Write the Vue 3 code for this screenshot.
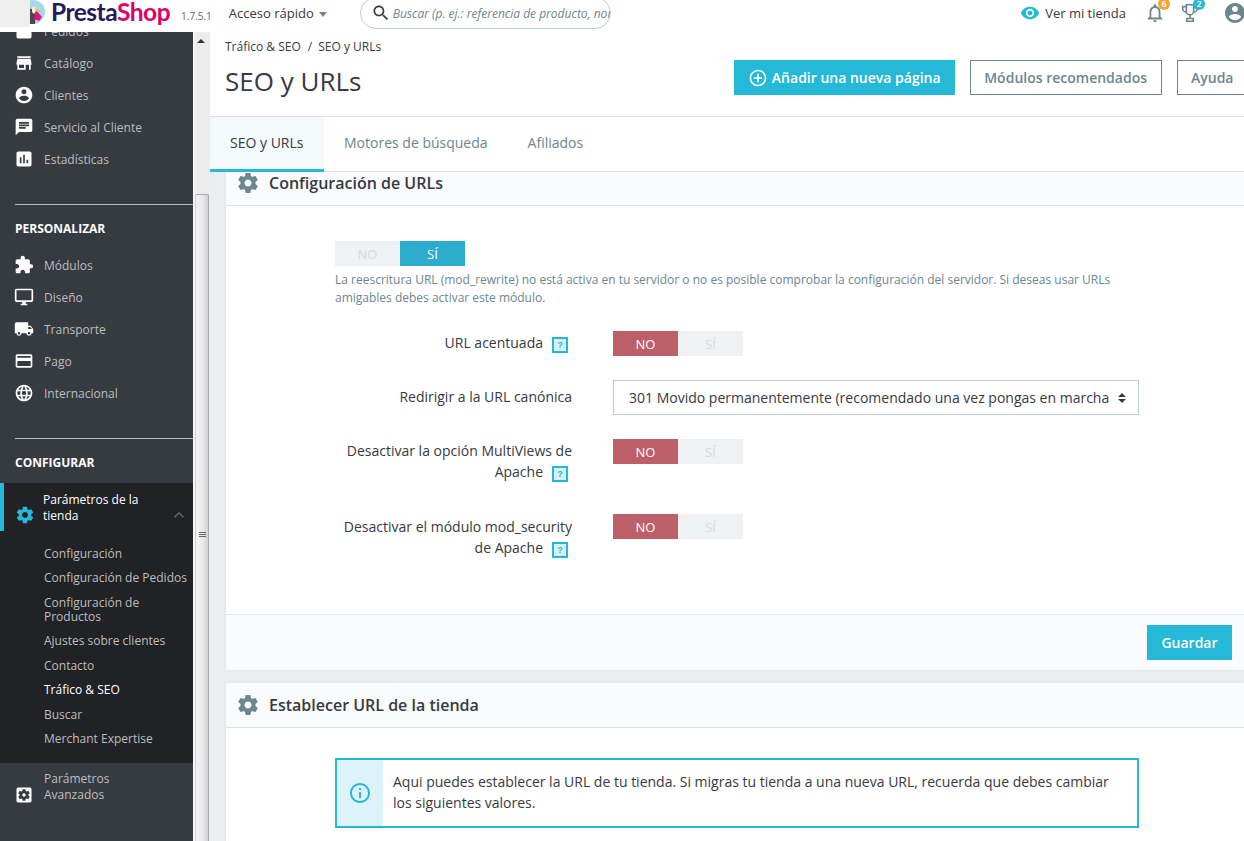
<script setup>
const P = {
  store: 'M20 4H4v2h16V4zm1 10v-2l-1-5H4l-1 5v2h1v6h10v-6h4v6h2v-6h1zm-9 4H6v-4h6v4z',
  account: 'M12 2C6.48 2 2 6.48 2 12s4.48 10 10 10 10-4.48 10-10S17.52 2 12 2zm0 3c1.66 0 3 1.34 3 3s-1.34 3-3 3-3-1.34-3-3 1.34-3 3-3zm0 14.2c-2.5 0-4.71-1.28-6-3.22.03-1.99 4-3.08 6-3.08 1.99 0 5.97 1.09 6 3.08-1.29 1.94-3.5 3.22-6 3.22z',
  chat: 'M20 2H4c-1.1 0-1.99.9-1.99 2L2 22l4-4h14c1.1 0 2-.9 2-2V4c0-1.1-.9-2-2-2zM6 9h12v2H6V9zm8 5H6v-2h8v2zm4-6H6V6h12v2z',
  stats: 'M19 3H5c-1.1 0-2 .9-2 2v14c0 1.1.9 2 2 2h14c1.1 0 2-.9 2-2V5c0-1.1-.9-2-2-2zM9 17H7v-7h2v7zm4 0h-2V7h2v10zm4 0h-2v-4h2v4z',
  ext: 'M20.5 11H19V7c0-1.1-.9-2-2-2h-4V3.5C13 2.12 11.88 1 10.5 1S8 2.12 8 3.5V5H4c-1.1 0-1.99.9-1.99 2v3.8H3.5c1.49 0 2.7 1.21 2.7 2.7s-1.21 2.7-2.7 2.7H2V20c0 1.1.9 2 2 2h3.8v-1.5c0-1.49 1.21-2.7 2.7-2.7 1.49 0 2.7 1.21 2.7 2.7V22H17c1.1 0 2-.9 2-2v-4h1.5c1.38 0 2.5-1.12 2.5-2.5S21.88 11 20.5 11z',
  desktop: 'M21 2H3c-1.1 0-2 .9-2 2v12c0 1.1.9 2 2 2h7v2H8v2h8v-2h-2v-2h7c1.1 0 2-.9 2-2V4c0-1.1-.9-2-2-2zm0 14H3V4h18v12z',
  truck: 'M20 8h-3V4H3c-1.1 0-2 .9-2 2v11h2c0 1.66 1.34 3 3 3s3-1.34 3-3h6c0 1.66 1.34 3 3 3s3-1.34 3-3h2v-5l-3-4zM6 18.5c-.83 0-1.5-.67-1.5-1.5s.67-1.5 1.5-1.5 1.5.67 1.5 1.5-.67 1.5-1.5 1.5zm13.5-9l1.96 2.5H17V9.5h2.5zm-1.5 9c-.83 0-1.5-.67-1.5-1.5s.67-1.5 1.5-1.5 1.5.67 1.5 1.5-.67 1.5-1.5 1.5z',
  card: 'M20 4H4c-1.11 0-1.99.89-1.99 2L2 18c0 1.11.89 2 2 2h16c1.11 0 2-.89 2-2V6c0-1.11-.89-2-2-2zm0 14H4v-6h16v6zm0-10H4V6h16v2z',
  globe: 'M11.99 2C6.47 2 2 6.48 2 12s4.47 10 9.99 10C17.52 22 22 17.52 22 12S17.52 2 11.99 2zm6.93 6h-2.95c-.32-1.25-.78-2.45-1.38-3.56 1.84.63 3.37 1.91 4.33 3.56zM12 4.04c.83 1.2 1.48 2.53 1.91 3.96h-3.82c.43-1.43 1.08-2.76 1.91-3.96zM4.26 14C4.1 13.36 4 12.69 4 12s.1-1.36.26-2h3.38c-.08.66-.14 1.32-.14 2 0 .68.06 1.34.14 2H4.26zm.82 2h2.95c.32 1.25.78 2.45 1.38 3.56-1.84-.63-3.37-1.9-4.33-3.56zm2.95-8H5.08c.96-1.66 2.49-2.93 4.33-3.56C8.81 5.55 8.35 6.75 8.03 8zM12 19.96c-.83-1.2-1.48-2.53-1.91-3.96h3.82c-.43 1.43-1.08 2.76-1.91 3.96zM14.34 14H9.66c-.09-.66-.16-1.32-.16-2 0-.68.07-1.35.16-2h4.68c.09.65.16 1.32.16 2 0 .68-.07 1.34-.16 2zm.25 5.56c.6-1.11 1.06-2.31 1.38-3.56h2.95c-.96 1.65-2.49 2.93-4.33 3.56zM16.36 14c.08-.66.14-1.32.14-2 0-.68-.06-1.34-.14-2h3.38c.16.64.26 1.31.26 2s-.1 1.36-.26 2h-3.38z',
  gear: 'M19.43 12.98c.04-.32.07-.64.07-.98s-.03-.66-.07-.98l2.11-1.65c.19-.15.24-.42.12-.64l-2-3.46c-.12-.22-.39-.3-.61-.22l-2.49 1c-.52-.4-1.08-.73-1.69-.98l-.38-2.65C14.46 2.18 14.25 2 14 2h-4c-.25 0-.46.18-.49.42l-.38 2.65c-.61.25-1.17.59-1.69.98l-2.49-1c-.23-.09-.49 0-.61.22l-2 3.46c-.13.22-.07.49.12.64l2.11 1.65c-.04.32-.07.65-.07.98s.03.66.07.98l-2.11 1.65c-.19.15-.24.42-.12.64l2 3.46c.12.22.39.3.61.22l2.49-1c.52.4 1.08.73 1.69.98l.38 2.65c.03.24.24.42.49.42h4c.25 0 .46-.18.49-.42l.38-2.65c.61-.25 1.17-.59 1.69-.98l2.49 1c.23.09.49 0 .61-.22l2-3.46c.12-.22.07-.49-.12-.64l-2.11-1.65zM12 15.5c-1.93 0-3.5-1.57-3.5-3.5s1.57-3.5 3.5-3.5 3.5 1.57 3.5 3.5-1.57 3.5-3.5 3.5z',
  gearBox: 'M12 10c-1.1 0-2 .9-2 2s.9 2 2 2 2-.9 2-2-.9-2-2-2zm7-7H5c-1.11 0-2 .9-2 2v14c0 1.1.89 2 2 2h14c1.11 0 2-.9 2-2V5c0-1.1-.89-2-2-2zm-1.75 9c0 .23-.02.46-.05.68l1.48 1.16c.13.11.17.3.08.45l-1.4 2.42c-.09.15-.27.21-.43.15l-1.74-.7c-.36.28-.76.51-1.18.69l-.26 1.85c-.03.17-.18.3-.35.3h-2.8c-.17 0-.32-.13-.35-.29l-.26-1.85c-.43-.18-.82-.41-1.18-.69l-1.74.7c-.16.06-.34 0-.43-.15l-1.4-2.42c-.09-.15-.05-.34.08-.45l1.48-1.16c-.03-.23-.05-.46-.05-.69 0-.23.02-.46.05-.68l-1.48-1.16c-.13-.11-.17-.3-.08-.45l1.4-2.42c.09-.15.27-.21.43-.15l1.74.7c.36-.28.76-.51 1.18-.69l.26-1.85c.03-.17.18-.3.35-.3h2.8c.17 0 .32.13.35.29l.26 1.85c.43.18.82.41 1.18.69l1.74-.7c.16-.06.34 0 .43.15l1.4 2.42c.09.15.05.34-.08.45l-1.48 1.16c.03.23.05.46.05.69z',
  orders: 'M19 3H5c-1.1 0-2 .9-2 2v14c0 1.1.9 2 2 2h14c1.1 0 2-.9 2-2V5c0-1.1-.9-2-2-2zm-7 8c-1.66 0-3-1.34-3-3h2c0 .55.45 1 1 1s1-.45 1-1h2c0 1.66-1.34 3-3 3z',
  eye: 'M12 4.5C7 4.5 2.73 7.61 1 12c1.73 4.39 6 7.5 11 7.5s9.27-3.11 11-7.5c-1.73-4.39-6-7.5-11-7.5zM12 17c-2.76 0-5-2.24-5-5s2.24-5 5-5 5 2.24 5 5-2.24 5-5 5zm0-8c-1.66 0-3 1.34-3 3s1.34 3 3 3 3-1.34 3-3-1.34-3-3-3z',
  bell: 'M12 22c1.1 0 2-.9 2-2h-4c0 1.1.9 2 2 2zm6-6v-5c0-3.07-1.63-5.64-4.5-6.32V4c0-.83-.67-1.5-1.5-1.5s-1.5.67-1.5 1.5v.68C7.64 5.36 6 7.92 6 11v5l-2 2v1h16v-1l-2-2zm-2 1H8v-6c0-2.48 1.51-4.5 4-4.5s4 2.02 4 4.5v6z',
  search: 'M15.5 14h-.79l-.28-.27C15.41 12.59 16 11.11 16 9.5 16 5.91 13.09 3 9.5 3S3 5.91 3 9.5 5.91 16 9.5 16c1.61 0 3.09-.59 4.23-1.57l.27.28v.79l5 4.99L20.49 19l-4.99-5zm-6 0C7.01 14 5 11.99 5 9.5S7.01 5 9.5 5 14 7.01 14 9.5 11.99 14 9.5 14z',
  add: 'M13 7h-2v4H7v2h4v4h2v-4h4v-2h-4V7zm-1-5C6.48 2 2 6.48 2 12s4.48 10 10 10 10-4.48 10-10S17.52 2 12 2zm0 18c-4.41 0-8-3.59-8-8s3.59-8 8-8 8 3.59 8 8-3.59 8-8 8z',
  info: 'M11 17h2v-6h-2v6zm1-15C6.48 2 2 6.48 2 12s4.48 10 10 10 10-4.48 10-10S17.52 2 12 2zm0 18c-4.41 0-8-3.59-8-8s3.59-8 8-8 8 3.59 8 8-3.59 8-8 8zM11 9h2V7h-2v2z',
  less: 'M12 8l-6 6 1.41 1.41L12 10.83l4.59 4.58L18 14z',
  trophy: 'M8 3h8v7a4 4 0 0 1-8 0V3zM8 5H4v2a4 4 0 0 0 4 4M16 5h4v2a4 4 0 0 1-4 4M12 14v4M8.5 18h7v3h-7z'
}
const top = [
  { t: 'Pedidos', i: P.orders },
  { t: 'Catálogo', i: P.store },
  { t: 'Clientes', i: P.account },
  { t: 'Servicio al Cliente', i: P.chat },
  { t: 'Estadísticas', i: P.stats }
]
const custom = [
  { t: 'Módulos', i: P.ext },
  { t: 'Diseño', i: P.desktop },
  { t: 'Transporte', i: P.truck },
  { t: 'Pago', i: P.card },
  { t: 'Internacional', i: P.globe }
]
const subs = [
  { t: 'Configuración', h: 24 },
  { t: 'Configuración de Pedidos', h: 24 },
  { t: 'Configuración de Productos', h: 39 },
  { t: 'Ajustes sobre clientes', h: 24 },
  { t: 'Contacto', h: 25 },
  { t: 'Tráfico & SEO', h: 24 },
  { t: 'Buscar', h: 25 },
  { t: 'Merchant Expertise', h: 24 }
]
subs[5].on = true
</script>

<template>
  <div class="page">
    <header class="topbar">
      <div class="patch"></div>
      <svg class="puffin" viewBox="0 0 24 24">
        <circle cx="12" cy="12" r="12" fill="#a9d8e6" />
        <path d="M9 9h6l-1 15H9z" fill="#4b4650" />
        <path d="M11 7c3-1 5 1 5 3l-3 4-2-2z" fill="#f3f1ec" />
        <path d="M15 10l6 7-3 4-5-2z" fill="#e5127c" />
        <path d="M14 8l4 2-3 2z" fill="#f6c21c" />
      </svg>
      <div class="logo"><span class="presta">Presta</span><span class="shop">Shop</span></div>
      <span class="version">1.7.5.1</span>
      <span class="quick">Acceso rápido <i class="caret"></i></span>
      <div class="search">
        <svg class="search-ic" viewBox="0 0 24 24"><path :d="P.search" /></svg>
        <span class="search-txt">Buscar (p. ej.: referencia de producto, nombre de cliente…)</span>
      </div>
      <div class="top-right">
        <svg class="eye" viewBox="0 0 24 24"><path :d="P.eye" /></svg>
        <span class="shop-link">Ver mi tienda</span>
        <span class="notif bell">
          <svg viewBox="0 0 24 24"><path :d="P.bell" /></svg>
          <b class="badge orange">6</b>
        </span>
        <span class="notif cup">
          <svg viewBox="0 0 24 24"><path class="stroke" :d="P.trophy" /></svg>
          <b class="badge blue">2</b>
        </span>
        <svg class="user" viewBox="0 0 24 24"><path :d="P.account" /></svg>
      </div>
    </header>

    <div class="shell">
      <aside class="side">
        <div class="side-inner">
          <a v-for="m in top" :key="m.t" class="item">
            <svg viewBox="0 0 24 24"><path :d="m.i" /></svg><span>{{ m.t }}</span>
          </a>
          <div class="sect first">PERSONALIZAR</div>
          <a v-for="m in custom" :key="m.t" class="item">
            <svg viewBox="0 0 24 24"><path :d="m.i" /></svg><span>{{ m.t }}</span>
          </a>
          <div class="sect second">CONFIGURAR</div>
          <div class="active-block">
            <div class="active-head">
              <svg class="act-gear" viewBox="0 0 24 24"><path :d="P.gear" /></svg>
              <span class="act-text">Parámetros de la tienda</span>
              <svg class="act-less" viewBox="0 0 24 24"><path :d="P.less" /></svg>
            </div>
            <div class="subs">
              <a
                v-for="s in subs"
                :key="s.t"
                class="sub"
                :class="{ on: s.on }"
                :style="{ height: s.h + 'px' }"
              >{{ s.t }}</a>
            </div>
          </div>
          <a class="item adv">
            <svg viewBox="0 0 24 24"><path :d="P.gearBox" /></svg><span>Parámetros Avanzados</span>
          </a>
        </div>
      </aside>

      <div class="scrollbar">
        <i class="arrow"></i>
        <div class="thumb"><div class="grip"><s></s><s></s><s></s></div></div>
      </div>

      <main class="main">
        <div class="head">
          <div class="crumbs"><span>Tráfico &amp; SEO</span><span class="sl">/</span><span>SEO y URLs</span></div>
          <div class="title-row">
            <h1>SEO y URLs</h1>
            <div class="actions">
              <button class="btn primary">
                <svg viewBox="0 0 24 24"><path :d="P.add" /></svg>Añadir una nueva página
              </button>
              <button class="btn outline">Módulos recomendados</button>
              <button class="btn outline">Ayuda</button>
            </div>
          </div>
        </div>
        <nav class="tabs">
          <a class="tab active">SEO y URLs</a>
          <a class="tab">Motores de búsqueda</a>
          <a class="tab">Afiliados</a>
        </nav>

        <div class="content">
          <section class="panel one">
            <div class="panel-head">
              <svg viewBox="0 0 24 24"><path :d="P.gear" /></svg>
              <span>Configuración de URLs</span>
            </div>
            <div class="panel-body">
              <div class="switch blue-on">
                <span class="off">NO</span><span class="sel">SÍ</span>
              </div>
              <p class="help">La reescritura URL (mod_rewrite) no está activa en tu servidor o no es posible comprobar la configuración del servidor. Si deseas usar URLs amigables debes activar este módulo.</p>

              <div class="row center">
                <div class="label">URL acentuada<i class="q">?</i></div>
                <div class="switch red-on"><span class="sel">NO</span><span class="off">SÍ</span></div>
              </div>
              <div class="row center">
                <div class="label">Redirigir a la URL canónica</div>
                <div class="select">
                  <span class="sel-text">301 Movido permanentemente (recomendado una vez pongas en marcha la tienda)</span>
                  <span class="sel-arrows"><i></i><i></i></span>
                </div>
              </div>
              <div class="row tall">
                <div class="label">Desactivar la opción MultiViews de Apache<i class="q">?</i></div>
                <div class="switch red-on"><span class="sel">NO</span><span class="off">SÍ</span></div>
              </div>
              <div class="row low">
                <div class="label">Desactivar el módulo mod_security de Apache<i class="q">?</i></div>
                <div class="switch red-on"><span class="sel">NO</span><span class="off">SÍ</span></div>
              </div>
            </div>
            <div class="panel-foot"><button class="btn primary save">Guardar</button></div>
          </section>

          <section class="panel two">
            <div class="panel-head">
              <svg viewBox="0 0 24 24"><path :d="P.gear" /></svg>
              <span>Establecer URL de la tienda</span>
            </div>
            <div class="panel-body2">
              <div class="alert">
                <div class="alert-ic"><svg viewBox="0 0 24 24"><path :d="P.info" /></svg></div>
                <div class="alert-txt">Aqui puedes establecer la URL de tu tienda. Si migras tu tienda a una nueva URL, recuerda que debes cambiar los siguientes valores.</div>
              </div>
            </div>
          </section>
        </div>
      </main>
    </div>
  </div>
</template>

<style>
html, body { margin: 0; height: 100%; overflow: hidden; background: #fff; }
</style>

<style scoped>
* { box-sizing: border-box; }
.page {
  width: 1244px; height: 841px; overflow: hidden; display: flex; flex-direction: column;
  font-family: "Open Sans", "Noto Sans", sans-serif; color: #363a41;
}
svg { display: block; fill: currentColor; flex: none; }

/* top bar */
.topbar { height: 32px; flex: none; display: flex; align-items: center; background: #fff; position: relative; z-index: 3; overflow: hidden; }
.patch { width: 30px; height: 27px; background: #efefef; align-self: flex-start; flex: none; position: relative; z-index: 1; }
.puffin { width: 24px; height: 24px; margin-left: -9px; margin-top: -8px; }
.logo { font-family: Lato, "Open Sans", sans-serif; font-weight: 700; font-size: 24.5px; letter-spacing: -.5px; margin-left: 6px; line-height: 1; margin-top: -7px; white-space: nowrap; }
.presta { color: #251b5b; }
.shop { color: #df0067; }
.version { font-size: 10px; color: #5c6469; margin-left: 11px; margin-top: 0; }
.quick { font-size: 13px; color: #363a41; margin-left: 17px; margin-top: -6px; white-space: nowrap; display: flex; align-items: center; gap: 5px; }
.caret { width: 0; height: 0; border: 4.5px solid transparent; border-top: 5px solid #6c868e; border-bottom: 0; margin-top: 2px; }
.search { width: 251px; height: 32px; margin-left: 33px; margin-top: -6px; border: 1px solid #bbcdd2; border-radius: 16px; display: flex; align-items: center; padding-left: 10px; gap: 2px; overflow: hidden; flex: none; }
.search-ic { width: 20px; height: 20px; color: #363a41; }
.search-txt { font-size: 12px; font-style: italic; color: #6c868e; white-space: nowrap; }
.top-right { margin-left: auto; display: flex; align-items: center; margin-top: -6px; margin-right: -3px; }
.eye { width: 20px; height: 20px; color: #25b9d7; }
.shop-link { font-size: 13px; color: #363a41; margin-left: 5px; margin-right: 18px; white-space: nowrap; }
.notif { position: relative; width: 20px; height: 22px; display: block; color: #6c868e; }
.notif svg { width: 22px; height: 22px; }
.cup { margin-left: 15px; margin-right: 24px; }
.stroke { fill: none; stroke: #6c868e; stroke-width: 1.8; }
.badge { position: absolute; top: -4px; right: -6px; width: 12px; height: 12px; border-radius: 50%; font-size: 9px; line-height: 12px; color: #fff; text-align: center; font-weight: 600; font-style: normal; }
.orange { background: #f0a835; }
.blue { background: #25b9d7; }
.user { width: 24px; height: 24px; color: #6c868e; }

/* shell */
.shell { flex: 1; min-height: 0; display: flex; }
.side { width: 193px; flex: none; background: #363a41; overflow: hidden; }
.side-inner { margin-top: -17px; }
.item { height: 32px; display: flex; align-items: center; padding-left: 14px; gap: 10px; font-size: 12px; color: #bebebe; }
.item svg { width: 20px; height: 20px; color: #fff; }
.sect { margin-left: 15px; border-top: 1px solid #bebebe; font-size: 12px; font-weight: 700; color: #fff; line-height: 16px; }
.sect.first { margin-top: 29px; padding-top: 16px; margin-bottom: 12px; }
.sect.second { margin-top: 29px; padding-top: 16px; margin-bottom: 12px; }
.active-block { background: #202226; height: 280px; }
.active-head { height: 48px; display: flex; align-items: center; border-left: 4px solid #25b9d7; padding-left: 11px; padding-right: 4px; color: #fff; }
.act-gear { width: 20px; height: 20px; color: #25b9d7; margin-top: 16px; }
.act-text { flex: 1; font-size: 12px; line-height: 16px; margin-left: 8px; padding-right: 12px; padding-top: 2px; color: #fff; }
.act-less { width: 20px; height: 20px; color: #5c6469; margin-top: 16px; }
.subs { padding-top: 11px; }
.sub { display: flex; align-items: center; padding-left: 44px; padding-right: 4px; font-size: 12px; line-height: 14px; color: #bebebe; }
.sub.on { color: #fff; }
.item.adv { height: 47px; align-items: center; }
.item.adv span { line-height: 16px; width: 90px; }
.item.adv svg { margin-top: 16px; }

/* scrollbar */
.scrollbar { width: 17px; flex: none; background: #ececec; border-left: 2px solid #f7f7f7; display: flex; flex-direction: column; align-items: stretch; }
.arrow { width: 0; height: 0; border: 4px solid transparent; border-bottom: 4px solid #333; border-top: 0; margin: 7px auto 0 2px; }
.thumb { margin-top: 151px; flex: 1; background: linear-gradient(90deg, #f2f2f2, #e8e8ea 60%, #d0d0d2); border: 1px solid #a8a8a8; border-bottom: 0; border-left-color: #cfcfcf; border-radius: 2px 2px 0 0; display: block; width: 14px; }
.grip { margin: 337px auto 0; width: 7px; display: flex; flex-direction: column; gap: 1px; }
.grip s { height: 1px; background: #666; }

/* main */
.main { flex: 1; min-width: 0; display: flex; flex-direction: column; overflow: hidden; background: #ebedee; }
.head { height: 85px; flex: none; background: #fff; border-bottom: 1px solid #dfe3e6; padding: 6px 0 0 15px; }
.crumbs { font-size: 12px; line-height: 17px; color: #363a41; display: flex; }
.sl { margin: 0 6px 0 7px; }
.title-row { display: flex; align-items: flex-start; margin-top: 5px; }
h1 { margin: 4px 0 0; font-size: 26px; font-weight: 400; line-height: 35px; letter-spacing: 0; color: #363a41; white-space: nowrap; }
.actions { margin-left: auto; margin-right: -4px; display: flex; gap: 15px; flex: none; }
.btn { font-family: inherit; height: 35px; border: 0; font-size: 14px; font-weight: 600; display: flex; align-items: center; justify-content: center; padding: 0; white-space: nowrap; }
.primary { background: #25b9d7; color: #fff; }
.actions .primary { width: 221px; gap: 4px; }
.actions .primary svg { width: 20px; height: 20px; }
.outline { background: #fff; border: 1px solid #6c868e; color: #6c868e; padding: 0 13.5px; }

.tabs { height: 55px; flex: none; background: #fff; display: flex; border-bottom: 1px solid #dfe3e6; position: relative; z-index: 2; margin-bottom: -1px; }
.tab { padding: 0 20px; font-size: 14px; line-height: 52px; color: #6c868e; height: 55px; }
.tab.active { color: #363a41; background: #f4f9fb; border-bottom: 3px solid #25b9d7; min-width: 114px; }

.content { flex: 1; min-height: 0; overflow: hidden; padding-left: 16px; margin-top: -10px; }
.panel { background: #fff; border-radius: 5px 0 0 5px; box-shadow: 0 0 4px rgba(0,0,0,.06); }
.panel-head { height: 45px; background: #fafbfc; border-bottom: 1px solid #dfe3e6; display: flex; align-items: center; padding-left: 10px; gap: 9px; font-size: 16px; font-weight: 600; color: #363a41; }
.panel-head svg { width: 24px; height: 24px; color: #6c868e; }
.panel-body { height: 408px; padding: 35px 0 0 109px; }
.switch { width: 130px; height: 25px; display: flex; font-size: 13px; font-weight: 400; flex: none; }
.switch span { width: 65px; display: flex; align-items: center; justify-content: center; }
.off { background: #eff1f2; color: #d5dadd; }
.blue-on .sel { background: #2eacce; color: #fff; }
.red-on .sel { background: #bd5f69; color: #fff; }
.help { margin: 5px 0 0; width: 790px; font-size: 12px; line-height: 18px; color: #6c868e; }
.row { display: grid; grid-template-columns: 237px 526px; column-gap: 41px; align-items: start; margin-top: 24px; }
.row.center { align-items: center; }
.row.tall { margin-bottom: 32px; }
.row.tall + .row { margin-top: 0; }
.label { font-size: 14px; line-height: 21px; text-align: right; padding-top: 1px; }
.row.center .label { padding: 0 0 2px; }
.row.low .label { padding-top: 2px; }
.q { display: inline-block; width: 16px; height: 16px; margin: 0 4px 0 9px; border: 2px solid #25b9d7; background: #d5eff5; color: #25b9d7; font-size: 9px; line-height: 12px; font-weight: 700; font-style: normal; text-align: center; vertical-align: 0; font-family: "Liberation Sans", sans-serif; }
.select { height: 35px; width: 526px; border: 1px solid #bbcdd2; display: flex; align-items: center; padding: 0 12px 0 15px; font-size: 14px; }
.sel-text { flex: 1; overflow: hidden; white-space: nowrap; }
.sel-arrows { display: flex; flex-direction: column; gap: 2px; margin-left: 8px; }
.sel-arrows i { width: 0; height: 0; border-left: 4px solid transparent; border-right: 4px solid transparent; }
.sel-arrows i:first-child { border-bottom: 4px solid #363a41; }
.sel-arrows i:last-child { border-top: 4px solid #363a41; }
.panel-foot { height: 56px; background: #fafbfc; border-top: 1px solid #dfe3e6; display: flex; justify-content: flex-end; align-items: flex-start; padding: 10px 12px 0 0; }
.save { width: 85px; }
.panel.two { margin-top: 13px; }
.panel-body2 { padding: 30px 0 0 109px; height: 130px; }
.alert { width: 804px; height: 70px; border: 2px solid #25b9d7; display: flex; }
.alert-ic { width: 46px; background: #dcf3f9; color: #25b9d7; display: flex; align-items: center; justify-content: center; }
.alert-ic svg { width: 24px; height: 24px; }
.alert-txt { flex: 1; padding: 11px 20px 0 10px; font-size: 14px; line-height: 21px; color: #363a41; }
</style>
